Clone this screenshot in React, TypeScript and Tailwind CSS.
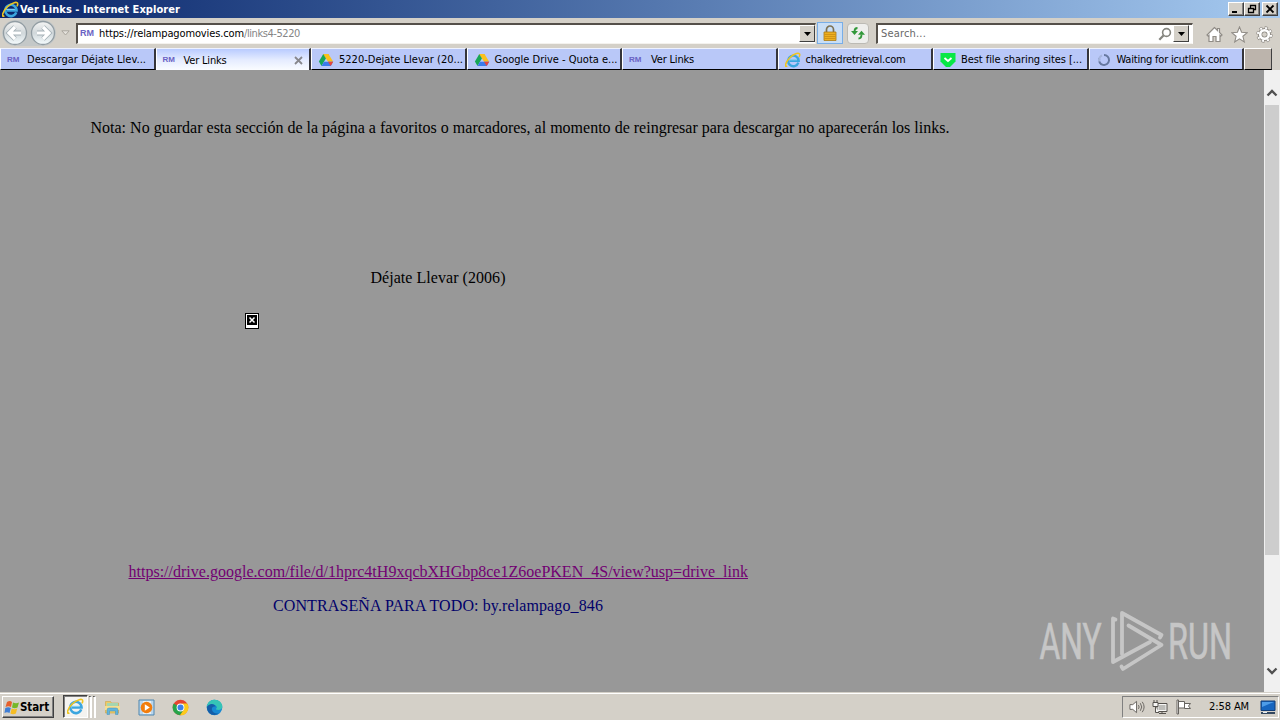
import { useLayoutEffect, useRef, useState, type ReactNode } from "react";

/** A single line of text whose tracking is adjusted so that it spans `width` pixels. */
function Line({ width, className = "", children }: { width: number; className?: string; children: string }) {
  const ref = useRef<HTMLSpanElement>(null);
  const [spacing, setSpacing] = useState(0);
  useLayoutEffect(() => {
    if (ref.current) setSpacing((width - ref.current.getBoundingClientRect().width) / children.length);
  }, [width, children]);
  return (
    <span ref={ref} className={`inline-block shrink-0 whitespace-pre ${className}`} style={{ letterSpacing: spacing }}>
      {children}
    </span>
  );
}

function IeLogo({ className = "" }: { className?: string }) {
  return (
    <svg viewBox="0 0 16 16" className={`shrink-0 ${className}`} fill="none">
      <path d="M13.4 10.7A5.3 5.3 0 1 1 13.7 8.8H4.6" stroke="#3ba6df" strokeWidth="2.4" />
      <path d="M4 7.800h8" stroke="#8ed6f4" strokeWidth="1" />
      <path d="M2.2 13.9C-.8 16 .2 10.3 4.8 5.7S14.7.3 14.8 2.500c.1.9-.3 1.800-.8 2.600" stroke="#efc51f" strokeWidth="1.500" />
    </svg>
  );
}

function Rm({ className = "text-[8px] leading-[14px]" }: { className?: string }) {
  return <span className={`w-4 shrink-0 font-['Liberation_Sans'] font-bold text-[#6a62c4] ${className}`}>RM</span>;
}

function Drive() {
  return (
    <svg viewBox="0 0 16 16" className="size-4 shrink-0">
      <path d="M5.3 2h5.2L8 6.3z" fill="#188038" />
      <path d="M5.3 2 8 6.3 3.5 14 .9 9.6z" fill="#17a757" />
      <path d="M5.3 2h5.2l4.7 7.8H10z" fill="#fbc11a" />
      <path d="M3.5 14 6 9.8h9.2L12.7 14z" fill="#3b7bea" />
      <path d="M10 9.8h5.2L12.7 14z" fill="#e8453c" />
    </svg>
  );
}

function Pocket() {
  return (
    <svg viewBox="0 0 16 16" className="size-4 shrink-0">
      <path d="M.5 1h15v8.5L10 15H6L.5 9.5z" fill="#08e846" />
      <path d="m4.5 6 3.5 3 3.5-3" fill="none" stroke="#fff" strokeWidth="1.8" />
    </svg>
  );
}

function Spinner() {
  return (
    <svg viewBox="0 0 16 16" className="size-4 shrink-0" fill="none" strokeWidth="2">
      <path d="M8 3a5 5 0 1 1-4.7 3.4" stroke="#66789f" />
      <path d="M3.2 9.5A5 5 0 0 1 6 3.5" stroke="#a5b4dc" />
    </svg>
  );
}

function NavArrow({ back = false }: { back?: boolean }) {
  const arrow = back ? "M13 7 7 13l6 6M8 13h11" : "m13 7 6 6-6 6M18 13H7";
  return (
    <svg viewBox="0 0 26 26" className="size-[26px] shrink-0">
      <defs>
        <linearGradient id={back ? "gb" : "gf"} x2="0" y2="1">
          <stop stopColor="#f5f5f4" />
          <stop offset=".5" stopColor="#d0d7da" />
          <stop offset="1" stopColor="#f5fcfe" />
        </linearGradient>
      </defs>
      <circle cx="13" cy="13" r="11.5" fill={back ? "url(#gb)" : "url(#gf)"} stroke="#929da3" strokeWidth="1.3" />
      <path d={arrow} fill="none" stroke="#a4b0b6" strokeWidth="4.800" />
      <path d={arrow} fill="none" stroke="#fff" strokeWidth="3.200" />
    </svg>
  );
}

function DropButton({ className = "" }: { className?: string }) {
  return (
    <div className={`flex h-[17px] w-4 shrink-0 items-center justify-center border border-t-white border-r-[#404040] border-b-[#404040] border-l-white bg-[#d4d0c8] ${className}`}>
      <svg viewBox="0 0 7 4" className="h-1 w-[7px]"><path d="M0 0h7L3.5 4z" fill="#000" /></svg>
    </div>
  );
}

function WinButton({ className = "", children }: { className?: string; children: ReactNode }) {
  return (
    <div className={`flex h-[14px] w-4 items-center justify-center border border-t-white border-r-[#404040] border-b-[#404040] border-l-white bg-[#d4d0c8] shadow-[inset_-1px_-1px_#808080] ${className}`}>
      <svg viewBox="0 0 12 10" className="h-[10px] w-3" fill="none" stroke="#000">{children}</svg>
    </div>
  );
}

function Tab({ icon, label, width, active = false, size = "w-[155.5px]", gap = "ml-[4px]" }: { icon: ReactNode; label: string; width: number; active?: boolean; size?: string; gap?: string }) {
  return (
    <div className={`flex h-full shrink-0 items-center border-t border-r-2 border-l border-t-[#eef2ff] border-r-[#35353a] border-l-white pt-px pl-[6px] ${size} ${active ? "bg-linear-to-b from-[#b9cbff] via-[#e4ebff] to-[#fafcff]" : "border-b border-b-black bg-[#b9c8f8]"}`}>
      {icon}
      <Line width={width} className={`pt-px ${gap}`}>{label}</Line>
      {active && (
        <svg viewBox="0 0 9 9" className="mr-[6px] ml-auto size-[9px]"><path d="m1 1 7 7M8 1 1 8" stroke="#87878c" strokeWidth="1.8" /></svg>
      )}
    </div>
  );
}

function TitleBar() {
  return (
    <div className="flex h-[18px] shrink-0 items-center bg-linear-to-r from-[#0a246a] to-[#a6caf0] pr-[2px] pl-[2px]">
      <IeLogo className="size-[17px]" />
      <Line width={160} className="ml-px pt-px text-[11px] font-bold text-white">Ver Links - Internet Explorer</Line>
      <div className="ml-auto flex">
        <WinButton><path d="M2 8h5" strokeWidth="2" /></WinButton>
        <WinButton><path d="M4.5 4V1.5h5v4H8M2.5 4.5h5v4h-5zM4 1.5h6M2 4.5h6" strokeWidth="1.3" /></WinButton>
        <WinButton className="ml-[2px]"><path d="m2.5 1.5 7 7M9.500 1.500l-7 7" strokeWidth="1.8" /></WinButton>
      </div>
    </div>
  );
}

function Toolbar() {
  return (
    <div className="flex h-[30px] shrink-0 items-center bg-[#d4d0c8]">
      <div className="ml-[2px] flex items-center gap-[2px] rounded-full bg-[#c4c8c8]">
        <NavArrow back />
        <NavArrow />
      </div>
      <svg viewBox="0 0 9 6" className="ml-[5px] h-[6px] w-[9px]"><path d="M.8.8h7.400L4.500 5z" fill="#e4e2dc" stroke="#aaa69e" /></svg>
      <div className="ml-[6px] flex h-[21px] w-[740px] items-center border-t-2 border-r border-b border-l-2 border-t-[#55504a] border-r-[#e8e6e0] border-b-[#f4f2ee] border-l-[#55504a] bg-white pl-[2px]">
        <Rm className="mr-[3px] pb-[2px] text-[9px] leading-[14px]" />
        <Line width={145}>https://relampagomovies.com</Line>
        <Line width={56} className="text-[#858585]">/links4-5220</Line>
        <DropButton className="ml-auto" />
      </div>
      <div className="ml-[1px] flex h-[22px] w-[26px] items-center justify-center border border-[#78aee8] bg-[#c9def6]">
        <svg viewBox="0 0 14 16" className="h-4 w-[14px]">
          <path d="M3.500 8V4.500a3.500 3.500 0 0 1 7 0V8" fill="none" stroke="#7d7153" strokeWidth="1.7" />
          <path d="M1 7h12v8.500H1z" fill="#eeb020" stroke="#a97a16" strokeWidth=".8" />
          <path d="M1.500 9.500h11M1.500 11.500h11M1.500 13.500h11" stroke="#c98d14" strokeWidth=".8" />
        </svg>
      </div>
      <div className="ml-[4px] flex h-[21px] w-[22px] items-center justify-center rounded-sm border border-[#bcbab4] bg-[#eeeeec]">
        <svg viewBox="0 0 16 14" className="h-[14px] w-4" fill="none" stroke="#32983a" strokeWidth="1.800">
          <path d="M7.500 2Q4.500 2 4.500 5.500M8.500 12.500q3 0 3-4" />
          <path d="M1 5h7L4.500 9zM8 8.800h7L11.500 4.800z" fill="#32983a" stroke="none" />
        </svg>
      </div>
      <div className="ml-[7px] flex h-[21px] w-[317px] items-center border-t-2 border-r border-b border-l-2 border-t-[#55504a] border-r-white border-b-[#f4f2ee] border-l-[#55504a] bg-white pl-[3px]">
        <Line width={45} className="text-[#686868]">Search...</Line>
        <svg viewBox="0 0 14 14" className="ml-auto size-[14px]" fill="none" stroke="#85857f">
          <circle cx="8.500" cy="5.500" r="3.900" strokeWidth="1.600" /><path d="M5.500 8.500 1.300 12.700" strokeWidth="2.300" />
        </svg>
        <DropButton className="mr-[3px] ml-[1px]" />
      </div>
      <div className="ml-[13px] flex items-center gap-[8px] pt-[3px]">
        <svg viewBox="0 0 17 17" className="size-[17px]" fill="#fff" stroke="#908c86" strokeWidth="1.200">
          <path d="M8.500 1.500 1 9l1.200 1.200.8-.8v6.100h4v-5h3v5h4V9.400l.8.8L16 9l-2.500-2.500v-4h-2v2z" />
        </svg>
        <svg viewBox="0 0 17 17" className="size-[17px]" fill="#fff" stroke="#908c86" strokeWidth="1.100">
          <path d="m8.500 1 2.100 5.300 5.700.4-4.400 3.600 1.400 5.600-4.800-3.100-4.800 3.100 1.400-5.600L.7 6.700l5.700-.4z" />
        </svg>
        <svg viewBox="0 0 17 17" className="size-[17px]" fill="none">
          <circle cx="8.500" cy="8.500" r="6.600" stroke="#908c86" strokeWidth="3.200" strokeDasharray="3 2.180" />
          <circle cx="8.500" cy="8.500" r="4.300" stroke="#908c86" strokeWidth="4.600" />
          <circle cx="8.500" cy="8.500" r="6.600" stroke="#fff" strokeWidth="2" strokeDasharray="2 3.180" strokeDashoffset="-.5" />
          <circle cx="8.500" cy="8.500" r="4.300" stroke="#fff" strokeWidth="2.600" />
          <circle cx="8.500" cy="8.500" r="2.100" fill="#d4d0c8" />
        </svg>
      </div>
    </div>
  );
}

function Chevron({ up = false }: { up?: boolean }) {
  return (
    <svg viewBox="0 0 12 8" className="h-2 w-3"><path d={up ? "m1.500 6.500 4.500-4.500 4.500 4.500" : "M1.500 1.500 6 6l4.500-4.500"} fill="none" stroke="#505050" strokeWidth="2.300" /></svg>
  );
}

function Watermark() {
  return (
    <svg viewBox="0 0 220 72" className="absolute top-[538px] left-[1036px] h-[72px] w-[220px]" fill="none">
      <g fill="#c6c6c6" stroke="#c6c6c6" strokeWidth=".7" fontFamily="Roboto, sans-serif" fontSize="50">
        <text x="3.500" y="51" textLength="62" lengthAdjust="spacingAndGlyphs">ANY</text>
        <text x="132" y="51" textLength="64" lengthAdjust="spacingAndGlyphs">RUN</text>
      </g>
      <g stroke="#c6c6c6" strokeWidth="3.800" strokeLinejoin="round" strokeLinecap="round">
        <path d="M86 46V5l39.500 22-1.500 2.500" />
        <path d="M79.500 11.500 77 10.500V54l37-20" />
        <path d="m92.500 17.500 33 19.500L87 61l-1.500-2.500" />
      </g>
    </svg>
  );
}

function Page() {
  return (
    <div className="flex h-[622px] shrink-0">
      <main className="relative w-[1264px] bg-[#989898] font-['Liberation_Serif',serif] text-[16px] leading-[18px] text-black">
        <p className="flex h-[198px] pt-[49px] pl-[90.5px]"><Line width={859}>Nota: No guardar esta sección de la página a favoritos o marcadores, al momento de reingresar para descargar no aparecerán los links.</Line></p>
        <p className="flex pt-[1px] pl-[370.5px]"><Line width={135}>Déjate Llevar (2006)</Line></p>
        <div className="mt-[26px] ml-[245px] h-[16px] w-[14px] border border-black bg-white p-px">
          <svg viewBox="0 0 10 10" className="size-[10px]"><path d="M0 0h10v10H0z" fill="#000" /><path d="m2.500 2.500 5 5M7.500 2.500l-5 5" stroke="#fff" strokeWidth="1.500" /></svg>
        </div>
        <p className="mt-[234px] flex pl-[128.5px] text-[#720072]"><Line width={619.5} className="underline">https://drive.google.com/file/d/1hprc4tH9xqcbXHGbp8ce1Z6oePKEN_4S/view?usp=drive_link</Line></p>
        <p className="mt-[16px] flex pl-[273px] text-[#00006a]"><Line width={330}>CONTRASEÑA PARA TODO: by.relampago_846</Line></p>
        <Watermark />
      </main>
      <div className="flex w-4 flex-col items-center bg-[#f0f0f0] pt-[19px] pb-[17px]">
        <Chevron up />
        <div className="mt-[8px] h-[450px] w-[14px] bg-[#cdcdcd]" />
        <div className="mt-auto flex"><Chevron /></div>
      </div>
    </div>
  );
}

function Taskbar() {
  return (
    <div className="flex h-7 shrink-0 items-center border-t border-[#d4d0c8] bg-[#d4d0c8] shadow-[inset_0_1px_#fff]">
      <div className="ml-[2px] flex h-[22px] w-[52px] items-center border border-t-white border-r-[#404040] border-b-[#404040] border-l-white pl-px shadow-[inset_-1px_-1px_#808080]">
        <svg viewBox="0 0 16 16" className="size-4 shrink-0">
          <path d="M3 3q3-2 5 0L7 8Q4.500 6.500 1.500 8z" fill="#e6602c" />
          <path d="M9 3.500q3 1.500 6 0L13.500 8.500q-3 1.500-5.500 0z" fill="#76b82a" />
          <path d="M1.300 9q3-1.500 5.500 0l-1.300 5q-2.500-1.500-5 0z" fill="#3f7ed5" />
          <path d="M7.700 9.500q3 1.500 5.500 0l-1.300 5q-3 1.500-5.500 0z" fill="#f6bd23" />
        </svg>
        <Line width={29} className="text-[11.500px] font-bold">Start</Line>
      </div>
      <div className="ml-[9px] flex h-[23px] w-[25px] items-center justify-center border border-t-[#404040] border-r-white border-b-white border-l-[#404040] bg-[#f4f3f0] shadow-[inset_1px_1px_#808080]">
        <IeLogo className="size-[17px]" />
      </div>
      <div className="ml-px h-[22px] w-[3px] border-t border-r-2 border-t-[#555] border-r-white" />
      <div className="ml-px h-[22px] w-[3px] border-t border-r-2 border-t-[#555] border-r-white" />
      <div className="ml-[8px] flex items-center gap-[17px] pt-px">
        <svg viewBox="0 0 17 17" className="size-[17px]">
          <path d="M1.500 2.500h5l1 1.500h7v10h-13z" fill="#edcb67" stroke="#c9a548" strokeWidth=".6" />
          <path d="M3 4h11v4H3z" fill="#a4d6b0" /><path d="M1 7h15v4H1z" fill="#f4de91" />
          <path d="M3 15.500V11q0-2 2-2h7q2 0 2 2v4.500h-2.500V12h-6v3.500z" fill="#62b5dc" stroke="#438fb9" strokeWidth=".5" />
        </svg>
        <svg viewBox="0 0 17 17" className="size-[17px]">
          <path d="M1 1h15v15H1z" fill="#bad6ed" stroke="#4f86ae" /><path d="M5 2h8v13H5z" fill="#e8f0f4" />
          <circle cx="8.500" cy="8.500" r="5.800" fill="#f27d0d" /><path d="M6.800 5.200v6.600l5-3.300z" fill="#fff" />
        </svg>
        <svg viewBox="0 0 17 17" className="size-[17px]">
          <circle cx="8.500" cy="8.500" r="7.800" fill="#e5442f" />
          <path d="M1.700 4.600A7.800 7.800 0 0 0 8 16.300l4-5.700z" fill="#27a44a" />
          <path d="M15.300 4.600A7.800 7.800 0 0 1 8 16.300l4-5.800-2-5.900z" fill="#fccb1a" />
          <circle cx="8.500" cy="8.500" r="3.900" fill="#fff" /><circle cx="8.500" cy="8.500" r="3" fill="#3d80e8" />
        </svg>
        <svg viewBox="0 0 17 17" className="size-[17px]">
          <circle cx="8.500" cy="8.500" r="7.800" fill="#1788d2" />
          <path d="M.8 8.300C1 3 5 .7 8.500.7c4.500 0 8 3.300 7.800 7-.2 2.500-2.500 3.600-5.400 3.100-1.300-.3-1.200-1 0-2.100C10.600 5 4 3.500.8 8.300z" fill="#35c4b6" />
          <path d="M1 7.700c3-4.200 7.700-3 8.500 0-2-1-4.100.4-3.600 3 .6 2.700 3.700 4.600 7.100 3.600C7.500 18.300.4 14.500 1 7.700z" fill="#145da7" />
        </svg>
      </div>
      <div className="mr-px ml-auto flex h-[22px] w-[157px] items-center border border-t-[#808080] border-r-white border-b-white border-l-[#808080] pl-[6px]">
        <svg viewBox="0 0 18 16" className="h-4 w-[17px]" fill="#fff" stroke="#66635f">
          <path d="M1 5.500h3L8 2v12l-4-3.500H1z" /><path d="M10 6q1.500 2 0 4M12 4q3 4 0 8M14 2.500q4 5.500 0 11" fill="none" />
        </svg>
        <svg viewBox="0 0 16 16" className="ml-[6px] size-4" stroke="#55524e" fill="#f7f7f5">
          <path d="M5 4.500h10v8H5zM7 14.500h7M10 12.500v2" /><path d="M6.500 6h7v5h-7z" fill="#bdbdb9" stroke="none" /><path d="M1 3.500h5v4H1zM2 1v2.500M5 1v2.500M3.500 7.500v6H7" />
        </svg>
        <svg viewBox="0 0 16 16" className="ml-[8px] size-4" stroke="#66635f" fill="#fff">
          <path d="M1 1h1.500v14H1zM2.500 2.500h6V9h-6zM8.500 4.500h6L12.500 7l2 2.500h-6z" />
        </svg>
        <Line width={40} className="ml-[17px] pt-px">2:58 AM</Line>
        <svg viewBox="0 0 16 14" className="mr-[2px] ml-auto h-[14px] w-[16px]">
          <path d="M1 1h14v9.500H1z" fill="#1765bf" stroke="#123d77" /><path d="M2 2h12L2 7z" fill="#4e9ce8" /><path d="M1 12h14v2H1z" fill="#33475e" /><path d="M3 12h4v1H3z" fill="#e5eef5" />
        </svg>
      </div>
    </div>
  );
}

export default function App() {
  return (
    <div className="flex h-[720px] w-[1280px] flex-col overflow-hidden bg-[#d4d0c8] font-['DejaVu_Sans_Condensed','DejaVu_Sans',sans-serif] text-[11px] leading-[14px] text-black">
      <TitleBar />
      <Toolbar />
      <div className="flex h-[22px] shrink-0">
        <Tab icon={<Rm />} label="Descargar Déjate Llev..." width={119} />
        <Tab icon={<Rm />} label="Ver Links" width={43} active gap="ml-[5px]" />
        <Tab icon={<Drive />} label="5220-Dejate Llevar (20..." width={124} gap="ml-[5px]" />
        <Tab icon={<Drive />} label="Google Drive - Quota e..." width={123} gap="ml-[5px]" />
        <Tab icon={<Rm />} label="Ver Links" width={43} gap="ml-[6px]" />
        <Tab icon={<IeLogo className="size-4" />} label="chalkedretrieval.com" width={100} gap="ml-[5px]" />
        <Tab icon={<Pocket />} label="Best file sharing sites [..." width={121} gap="ml-[5px]" />
        <Tab icon={<Spinner />} label="Waiting for icutlink.com" width={112} size="w-[155.5px]" gap="ml-[5px]" />
        <div className="w-[28px] border-t border-r border-b border-l border-t-white border-r-[#404040] border-b-black border-l-white bg-[#bcb4ac]" />
      </div>
      <Page />
      <Taskbar />
    </div>
  );
}
